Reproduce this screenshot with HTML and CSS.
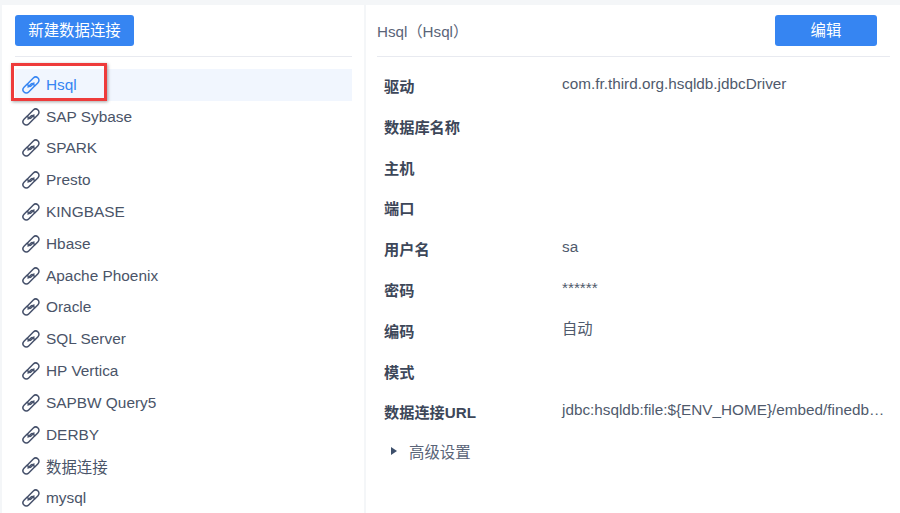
FILE: index.html
```html
<!DOCTYPE html>
<html lang="zh">
<head>
<meta charset="utf-8">
<title>数据连接</title>
<link rel="stylesheet" href="styles.css">
</head>
<body>
<svg class="defs" width="0" height="0" aria-hidden="true">
  <symbol id="link" viewBox="0 0 18 18">
    <g transform="rotate(-45 9 9)" fill="none" stroke="currentColor" stroke-width="1.5" stroke-linecap="round">
      <path d="M11 12.3 H15.6 A3.3 3.3 0 0 0 15.6 5.7 H8.6 A2 2 0 0 0 8.6 9.7 H12.5"/>
      <path d="M7 5.7 H2.4 A3.3 3.3 0 0 0 2.4 12.3 H9.4 A2 2 0 0 0 9.4 8.3 H5.5"/>
    </g>
  </symbol>
</svg>
<div class="page">
  <aside class="side">
    <div class="side-head"><button class="btn btn-new">新建数据连接</button></div>
    <ul class="list">
      <li class="row active"><svg class="ic"><use href="#link"/></svg>Hsql</li>
      <li class="row"><svg class="ic"><use href="#link"/></svg>SAP Sybase</li>
      <li class="row"><svg class="ic"><use href="#link"/></svg>SPARK</li>
      <li class="row"><svg class="ic"><use href="#link"/></svg>Presto</li>
      <li class="row"><svg class="ic"><use href="#link"/></svg>KINGBASE</li>
      <li class="row"><svg class="ic"><use href="#link"/></svg>Hbase</li>
      <li class="row"><svg class="ic"><use href="#link"/></svg>Apache Phoenix</li>
      <li class="row"><svg class="ic"><use href="#link"/></svg>Oracle</li>
      <li class="row"><svg class="ic"><use href="#link"/></svg>SQL Server</li>
      <li class="row"><svg class="ic"><use href="#link"/></svg>HP Vertica</li>
      <li class="row"><svg class="ic"><use href="#link"/></svg>SAPBW Query5</li>
      <li class="row"><svg class="ic"><use href="#link"/></svg>DERBY</li>
      <li class="row"><svg class="ic"><use href="#link"/></svg>数据连接</li>
      <li class="row"><svg class="ic"><use href="#link"/></svg>mysql</li>
    </ul>
    <div class="callout"></div>
  </aside>
  <main class="main">
    <div class="main-head"><span class="title">Hsql（Hsql）</span><button class="btn btn-edit">编辑</button></div>
    <dl class="fields">
      <div class="field"><dt>驱动</dt><dd>com.fr.third.org.hsqldb.jdbcDriver</dd></div>
      <div class="field"><dt>数据库名称</dt><dd></dd></div>
      <div class="field"><dt>主机</dt><dd></dd></div>
      <div class="field"><dt>端口</dt><dd></dd></div>
      <div class="field"><dt>用户名</dt><dd>sa</dd></div>
      <div class="field"><dt>密码</dt><dd>******</dd></div>
      <div class="field"><dt>编码</dt><dd>自动</dd></div>
      <div class="field"><dt>模式</dt><dd></dd></div>
      <div class="field"><dt>数据连接URL</dt><dd>jdbc:hsqldb:file:${ENV_HOME}/embed/finedb…</dd></div>
    </dl>
    <div class="advanced"><span class="tri"></span>高级设置</div>
  </main>
</div>
</body>
</html>
```
FILE: styles.css
```css
* { box-sizing: border-box; }
html, body { margin: 0; height: 100%; }
body {
  width: 900px; height: 513px; overflow: hidden; background: #f4f6f8;
  font-family: "Liberation Sans", "Noto Sans CJK SC", sans-serif;
  color: #4a5468; font-size: 15.4px;
}
.defs { position: absolute; }
.page { display: flex; gap: 2px; padding: 5px 0 0 2px; height: 513px; }
.side { position: relative; width: 362px; background: #fff; padding: 0 12px 0 13px; overflow: hidden; flex: none; }
.side-head { height: 52px; padding-top: 10px; border-bottom: 1px solid #e8eaf0; margin-bottom: 12px; }
.btn { border: 0; border-radius: 3px; background: #3685f2; color: #fff; font: 15.4px/31px "Liberation Sans", "Noto Sans CJK SC", sans-serif; height: 31px; padding: 0; display: block; }
.btn-new { width: 119px; }
.btn-edit { width: 102px; }
.list { list-style: none; margin: 0; padding: 0; }
.row { height: 31.8px; display: flex; align-items: center; padding-left: 7px; gap: 6px; white-space: nowrap; }
.ic { width: 18px; height: 18px; flex: none; color: #45506a; }
.row.active { background: #f1f6fe; color: #3685f2; }
.row.active .ic { color: #3685f2; }
.callout { position: absolute; left: 9px; top: 58px; width: 96px; height: 38px; border: 3px solid #ee3b3b; box-shadow: 1px 1px 3px rgba(0,0,0,.35); }
.main { flex: 1; background: #fff; padding: 0 10px 0 11px; min-width: 0; }
.main-head { height: 52px; padding-top: 10px; border-bottom: 1px solid #e8eaf0; display: flex; justify-content: space-between; padding-right: 13px; margin-bottom: 15px; }
.title { font-size: 15.2px; line-height: 33px; color: #5a6478; }
.fields { margin: 0; }
.field { display: flex; height: 40.8px; padding-left: 7px; align-items: flex-start; }
dt { width: 178px; flex: none; font-size: 15.2px; font-weight: 700; color: #3d4759; line-height: 30px; }
dd { margin: 0; font-size: 15.3px; line-height: 24px; color: #4f5a6c; white-space: nowrap; }
.advanced { display: flex; align-items: center; height: 24px; padding-left: 14px; color: #5a6478; }
.tri { width: 0; height: 0; border-left: 6px solid #3d4f6b; border-top: 4.5px solid transparent; border-bottom: 4.5px solid transparent; margin-right: 12px; }
```
